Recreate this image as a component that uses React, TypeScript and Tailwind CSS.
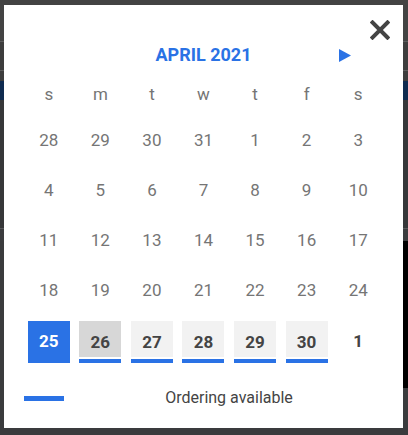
import React from "react";

const BLUE = "bg-[#2a72e5]";

const rows: number[][] = [
  [28, 29, 30, 31, 1, 2, 3],
  [4, 5, 6, 7, 8, 9, 10],
  [11, 12, 13, 14, 15, 16, 17],
  [18, 19, 20, 21, 22, 23, 24],
];

const labels = ["s", "m", "t", "w", "t", "f", "s"];

function LastRow() {
  const avail = [26, 27, 28, 29, 30];
  return (
    <div className="grid grid-cols-7 h-[50px] pt-[5px]">
      <div className="flex justify-center">
        <div className={`w-[42px] h-[42px] ${BLUE} flex items-center justify-center text-white font-bold text-[17px]`}>
          25
        </div>
      </div>
      {avail.map((d) => (
        <div key={d} className="flex justify-center">
          <div className="w-[42px] h-[42px] flex flex-col">
            <div
              className={`h-[36px] flex items-end justify-center pb-[6px] leading-none font-bold text-[17px] text-[#444444] ${
                d === 26 ? "bg-[#d7d7d7]" : "bg-[#f2f2f2]"
              }`}
            >
              {d}
            </div>
            <div className="h-[2px]" />
            <div className={`h-[4px] ${BLUE}`} />
          </div>
        </div>
      ))}
      <div className="flex justify-center">
        <div className="w-[42px] h-[42px] flex items-center justify-center font-bold text-[17px] text-[#444444]">
          1
        </div>
      </div>
    </div>
  );
}

export default function App() {
  return (
    <div
      className="relative w-[408px] h-[435px] overflow-hidden bg-[#3a3b3d]"
      style={{ fontFamily: "Roboto, 'Noto Sans', sans-serif" }}
    >
      {/* background page under the overlay */}
      <div className="flex flex-col">
        <div className="h-[41px] bg-[#434343]" />
        <div className="h-px bg-[#5c5c5c]" />
        <div className="h-[28px] bg-[#3d3d3d]" />
        <div className="h-px bg-[#5c5c5c]" />
        <div className="h-[10px] bg-[#3d3d3d]" />
        <div className="h-[19px] bg-[#0f2b50]" />
        <div className="h-[128px] bg-[#363739]" />
        <div className="h-px bg-[#58595b]" />
        <div className="h-[12px] bg-[#3b3c3e]" />
        <div className="h-[147px] flex">
          <div className="flex-1 bg-[#3a3b3d]" />
          <div className="w-[20px] bg-black" />
        </div>
        <div className="flex-1 bg-[#3a3b3d]" />
      </div>

      {/* modal */}
      <div className="absolute left-[4px] top-[5px] w-[399px] h-[423px] bg-white">
        <button className="absolute right-[13px] top-[15px] w-[20px] h-[20px]">
          <svg viewBox="0 0 20 20" width="20" height="20">
            <path d="M2.5 2.5 L17.5 17.5 M17.5 2.5 L2.5 17.5" stroke="#444444" strokeWidth="4" strokeLinecap="square" />
          </svg>
        </button>

        <div className="px-[19px]">
          <div className="relative pt-[38px] h-[62px] flex justify-center">
            <div className="h-[24px] leading-[24px] text-[18px] font-bold text-[#2a72e5]">
              APRIL 2021
            </div>
            <div className="absolute left-[316px] top-[44px]">
              <svg width="12" height="13" viewBox="0 0 12 13">
                <path d="M0 0 L12 6.5 L0 13 Z" fill="#2a72e5" />
              </svg>
            </div>
          </div>

          <div className="grid grid-cols-7 mt-[15px] h-[24px] leading-[24px] text-[17px] text-[#757575]">
            {labels.map((l, i) => (
              <div key={i} className="text-center">
                {l}
              </div>
            ))}
          </div>

          <div className="mt-[10px]">
            {rows.map((r, ri) => (
              <div key={ri} className="grid grid-cols-7 h-[50px] items-center text-[17px] text-[#757575]">
                {r.map((d, di) => (
                  <div key={di} className="text-center">
                    {d}
                  </div>
                ))}
              </div>
            ))}
            <LastRow />
          </div>

          <div className="flex items-center mt-[22px] h-[20px]">
            <div className={`w-[40px] h-[5px] ${BLUE} ml-[1px]`} />
            <div className="flex-1 text-center pl-[10px] text-[16px] text-[#444444]">Ordering available</div>
          </div>
        </div>
      </div>
    </div>
  );
}
